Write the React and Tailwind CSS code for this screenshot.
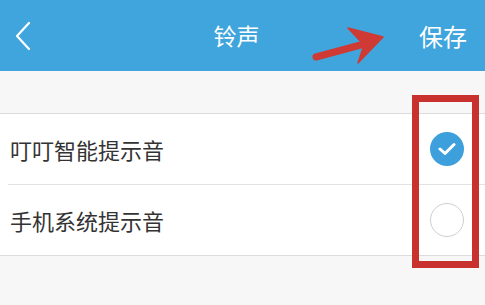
import React from 'react';

const font = { fontFamily: '"Noto Sans CJK SC", "Noto Sans", sans-serif' };

const Row = ({ label, checked }) => (
    <div className="flex items-center h-[70px] pl-[10px] pr-[21px]">
        <div className="flex-1 flex items-center h-full">
            <span className="text-[22px] text-[#333333] leading-none">{label}</span>
        </div>
        {checked ? (
            <div className="w-[34px] h-[34px] rounded-full bg-[#3d9fdb] flex items-center justify-center">
                <svg width="18" height="14" viewBox="0 0 18 14" fill="none">
                    <path d="M2 7 L7 11.5 L16 2.5" stroke="white" strokeWidth="3" strokeLinecap="round" strokeLinejoin="round" />
                </svg>
            </div>
        ) : (
            <div className="w-[34px] h-[34px] rounded-full border-[1.5px] border-[#cfcfcf] bg-white" />
        )}
    </div>
);

const App = () => {
    return (
        <div className="relative w-[485px] h-[305px] bg-[#f7f7f7] overflow-hidden" style={font}>
            {/* header */}
            <div className="flex items-center justify-between h-[71px] bg-[#3fa5dc] px-[14px] text-white">
                <svg width="18" height="30" viewBox="0 0 18 30" fill="none">
                    <path d="M15 2 L3 15 L15 28" stroke="white" strokeWidth="2.2" strokeLinecap="round" strokeLinejoin="round" />
                </svg>
                <span className="text-[23px] leading-none ml-[22px]">铃声</span>
                <span className="text-[24px] leading-none mr-[4px]">保存</span>
            </div>

            {/* list */}
            <div className="mt-[42px] bg-white border-y border-[#dcdcdc]">
                <Row label="叮叮智能提示音" checked />
                <div className="ml-[8px] border-t border-[#e2e2e2]" />
                <Row label="手机系统提示音" />
            </div>

            {/* annotation arrow */}
            <svg className="absolute left-[312px] top-[22px]" width="80" height="46" viewBox="0 0 80 46">
                <path d="M4 35 L56 21" stroke="#cf3a35" strokeWidth="7" strokeLinecap="round" fill="none" />
                <path d="M36 6 L71 15 L46 41 L52 23 Z" fill="#cf3a35" strokeLinejoin="round" stroke="#cf3a35" strokeWidth="1.5" />
            </svg>

            {/* annotation box */}
            <div className="absolute left-[412px] top-[95px] w-[67px] h-[173px] border-[7px] border-[#c8312e]" />
        </div>
    );
};

export default App;
